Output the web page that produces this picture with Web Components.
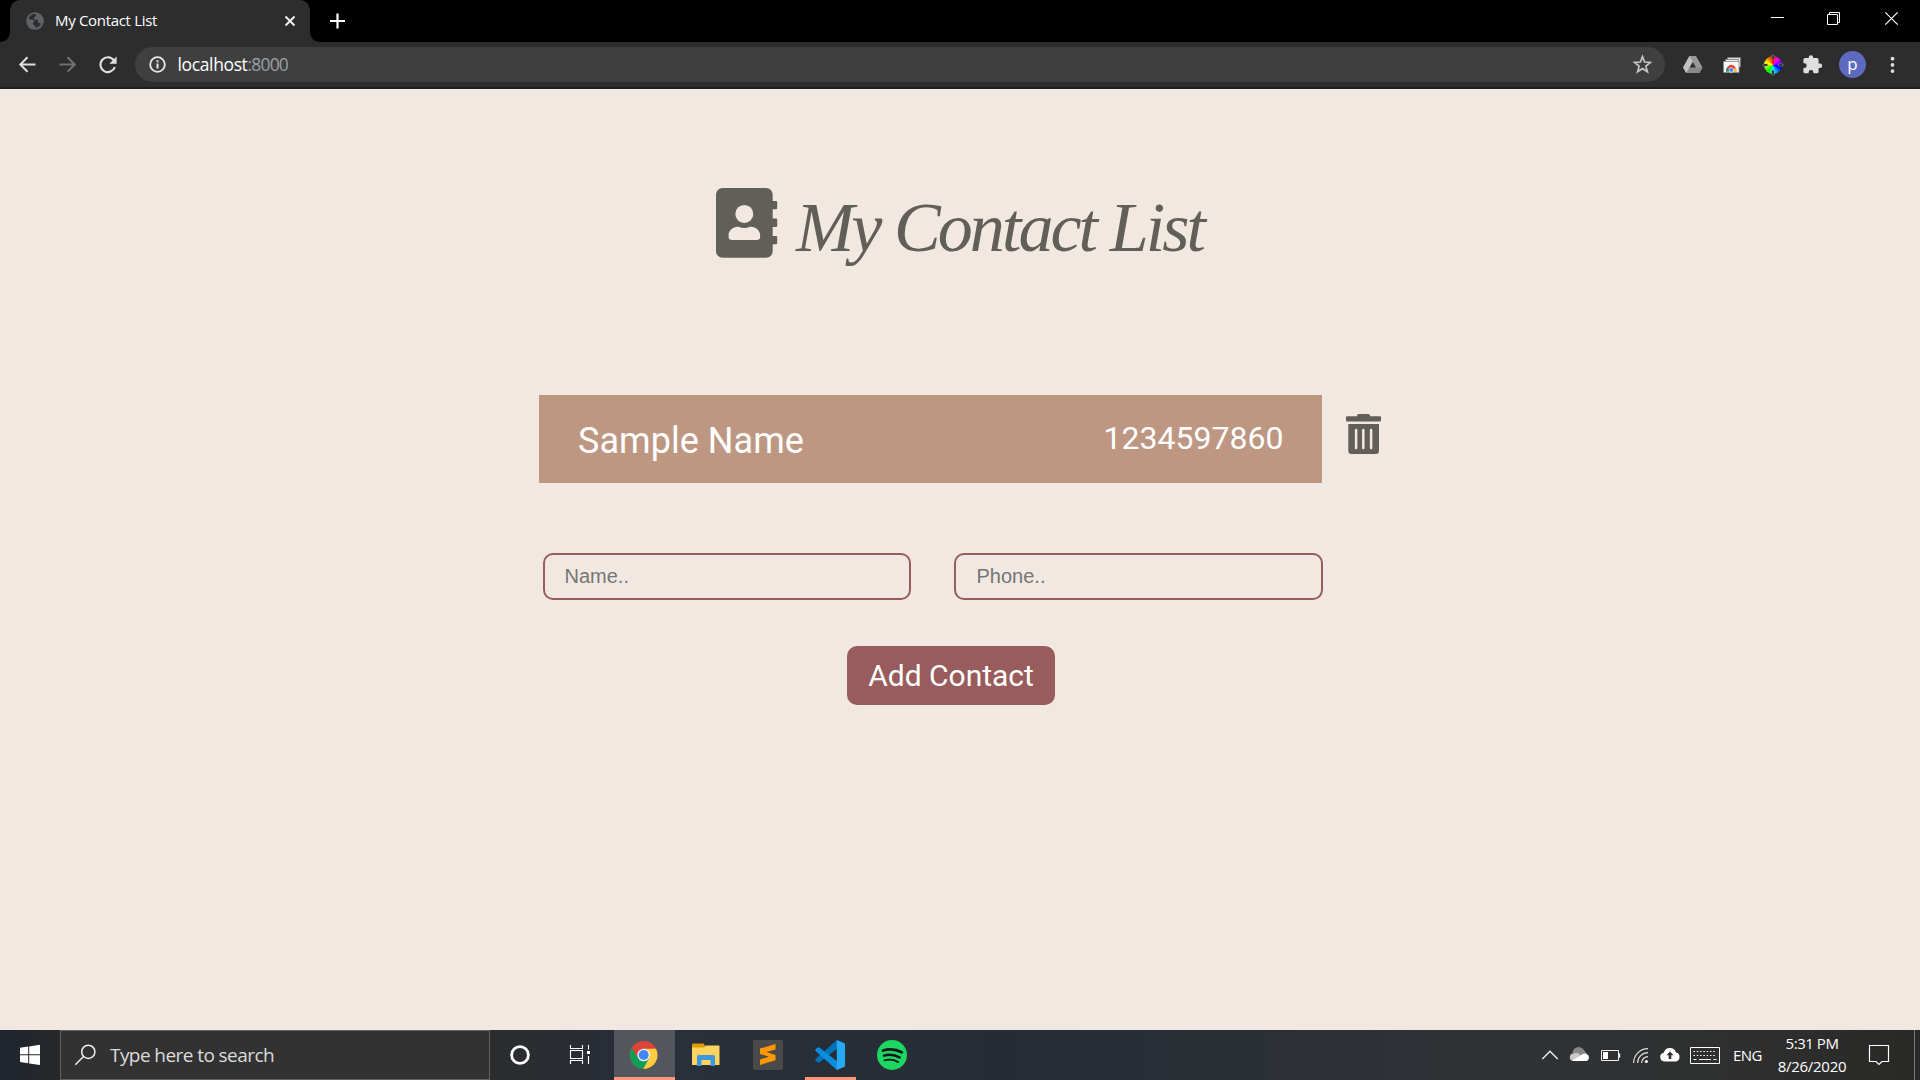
<!DOCTYPE html>
<html lang="en">
<head>
<meta charset="utf-8">
<title>My Contact List</title>
<style>
html,body{margin:0;height:100%;overflow:hidden;background:#f1e8e1}
</style>
</head>
<body>
<desktop-screen></desktop-screen>
<script>
const define = (name, html, setup) => customElements.define(name, class extends HTMLElement {
  connectedCallback() {
    if (this.shadowRoot) return;
    this.attachShadow({ mode: 'open' }).innerHTML = html;
    if (setup) setup.call(this, this.shadowRoot);
  }
});

/* A single line of text whose tracking is adjusted to fill the width in its "w" attribute. */
define('fit-text', `<style>:host{display:block;white-space:nowrap;flex:none}span{display:inline-block}</style><span><slot></slot></span>`,
function (root) {
  const w = +this.getAttribute('w'), s = root.querySelector('span');
  const text = root.querySelector('slot').assignedNodes({ flatten: true }).map(n => n.textContent).join('');
  this.style.width = w + 'px';
  s.style.letterSpacing = (w - s.getBoundingClientRect().width) / text.length + 'px';
});

/* SVG icon; "box" is its viewBox and also gives its size. */
define('svg-icon', `<style>:host{display:block;flex:none}svg{display:block;overflow:visible}</style>`,
function (root) {
  const b = this.getAttribute('box').split(' ');
  const svg = this.querySelector('template').content.querySelector('svg').cloneNode(true);
  svg.setAttribute('width', b[2]);
  svg.setAttribute('height', b[3]);
  svg.setAttribute('viewBox', b.join(' '));
  root.append(svg);
});

const icon = (box, gap, body) => `<svg-icon box="${box}" style="margin-left:${gap}px"><template><svg fill="none">${body}</svg></template></svg-icon>`;

define('browser-tabs', `<style>
:host{display:flex;height:42px;background:#000;font:15px/41px "Open Sans","Noto Sans",sans-serif;color:#fff}
.tab{display:flex;width:300px;height:42px;margin-left:10px;background:#2d2d2d;border-radius:10px 10px 0 0;position:relative}
.tab::before,.tab::after{content:"";position:absolute;bottom:0;width:10px;height:10px}
.tab::before{left:-10px;background:radial-gradient(circle at 0 0,transparent 9.5px,#2d2d2d 10.5px)}
.tab::after{right:-10px;background:radial-gradient(circle at 100% 0,transparent 9.5px,#2d2d2d 10.5px)}
fit-text{margin-left:11px}
.win{display:flex;margin-left:auto;padding-right:22px}
</style>
<div class="tab">
${icon('26 0 18 42', 16, `<circle cx="35" cy="21" r="8.8" fill="#5f6368"/><path d="M36 14.200c-3.400-.6-6.300 1.500-7.300 4.600 2.300 1.400 4.600.3 5.200 1.900.5 1.400-1.200 1.800-1 3.200.2 1.300 2 .8 2.300 2.200.1.600.1 1.200.2 1.700 2.600-.2 4.600-1.800 5.600-4-1.100-.8-2-.3-2.700-1.200-.8-1 .2-1.700-.8-2.500-1.200-.9-3.300.2-3.700-1.300-.4-1.700 2.400-1.500 2.200-4.600z" fill="#2d2d2d"/>`)}
<fit-text w="102">My Contact List</fit-text>
${icon('285 0 10 42', 128, `<path d="M285.500 16.500l9 9m0-9l-9 9" stroke="#f1f1f1" stroke-width="2"/>`)}
</div>
${icon('330 0 15 42', 20, `<path d="M337.500 13.500v15M330 21h15" stroke="#fff" stroke-width="2.200"/>`)}
<div class="win">
${icon('1771 0 13 42', 0, `<path d="M1771 17.500h13" stroke="#fff"/>`)}
${icon('1827 0 13 42', 43, `<path d="M1827.500 14.500h10v10h-10zM1829.500 14.500v-2h10v10h-2" stroke="#fff"/>`)}
${icon('1885 0 13 42', 45, `<path d="M1885.300 12.300l12.400 12.400m0-12.400l-12.400 12.400" stroke="#fff" stroke-width="1.200"/>`)}
</div>`);

define('browser-toolbar', `<style>
:host{display:flex;box-sizing:border-box;height:47px;background:#2d2d2d;border-bottom:2px solid #202020;font:17.500px/45px "Open Sans","Noto Sans",sans-serif;color:#fff}
.url{display:flex;box-sizing:border-box;width:1530px;height:35px;line-height:35px;margin:5px 0 0 18px;border-radius:18px;background:#3f3f3f}
.port{color:#9aa0a6}
.wheel{flex:none;width:18px;height:18px;border-radius:50%;margin:13.500px 0 0 22px;background:conic-gradient(#f00,#f0f,#80f,#00f,#08f,#0ff,#0f0,#8f0,#ff0,#f80,#f00)}
.me{flex:none;width:27px;height:27px;border-radius:50%;margin:9px 0 0 17px;background:#5c6bc0;font:17px/25px "Open Sans",sans-serif;text-align:center}
</style>
${icon('19 42 17 45', 19, `<path d="M35.500 64.500H20.500M27.500 57.300l-7.200 7.200 7.200 7.200" stroke="#e0e0e0" stroke-width="2"/>`)}
${icon('59 42 17 45', 23, `<path d="M59.500 64.500h15M67.500 57.300l7.200 7.200-7.200 7.200" stroke="#717171" stroke-width="2"/>`)}
${icon('99 42 18 45', 23, `<path d="M113.800 60.200A7.400 7.400 0 1 0 114.900 67" stroke="#e0e0e0" stroke-width="2.100"/><path d="M116.600 56.500v7.300h-7.300z" fill="#e0e0e0"/>`)}
<div class="url">
${icon('149 47 17 35', 14, `<circle cx="157.500" cy="64.500" r="7.300" stroke="#e8e8e8" stroke-width="1.800"/><path d="M157.500 63.500v5M157.500 60.300v2" stroke="#e8e8e8" stroke-width="2"/>`)}
<fit-text w="70" style="margin-left:11.500px">localhost</fit-text><fit-text class="port" w="40.500">:8000</fit-text>
${icon('1633 47 19 35', 1345, `<path d="M1642.500 56.600l2.100 5.400 5.800.4-4.500 3.700 1.500 5.700-4.900-3.200-4.900 3.200 1.500-5.700-4.500-3.700 5.800-.4z" stroke="#c6c6c6" stroke-width="1.700"/>`)}
</div>
${icon('1683 42 20 45', 18, `<path d="M1689.500 56h6.500l6.500 11.500-3.200 5.500h-13l-3.200-5.500z" fill="#999"/><path d="M1689.500 56l3.300 5.700-6.500 11.300-3.200-5.500z" fill="#c1c1c1"/><path d="M1686.300 73l3.300-5.500h12.900l-3.200 5.500z" fill="#8a8a8a"/><path d="M1692.800 62l3.100 5.500h-6.300z" fill="#2d2d2d"/>`)}
${icon('1723 42 19 45', 20, `<path d="M1727.500 57.500h13v9.500h-13z" fill="#ddd" stroke="#777" stroke-width=".8"/><path d="M1725.500 59.500h13v10h-13z" fill="#eee" stroke="#777" stroke-width=".8"/><path d="M1723.500 61.500h15.500v11h-15.500z" fill="#f8f8f8" stroke="#888" stroke-width=".8"/><path d="M1726 71.500a5.300 6.800 0 0 1 10.600 0z" fill="#e04438"/><path d="M1726 71.500a5 5 0 0 1 1-3.500l3 1.500-1 2z" fill="#0f9d58"/><path d="M1735.500 68a5 5 0 0 1 1.100 3.500h-3.200l-1-2z" fill="#fbc02d"/><circle cx="1731.300" cy="70" r="2.300" fill="#4285f4" stroke="#fff" stroke-width=".6"/>`)}
<div class="wheel">${icon('1764 55.500 18 18', 0, `<g fill="#111" stroke="#999" stroke-width=".6"><path d="M1772 54.700h2v4.500h-2zM1772 69.800h2v4.500h-2zM1763 63.500h4.500v2h-4.500zM1778.500 63.500h4.500v2h-4.500z"/></g>`)}</div>
${icon('1803 42 19 45', 21, `<path d="M1820 63.500h-1.400v-3.600c0-1-.8-1.800-1.800-1.800h-3.600v-.5a2.200 2.200 0 0 0-4.500 0v.5h-3.500c-1 0-1.800.8-1.800 1.800v3.400h.9a2.400 2.400 0 0 1 0 4.800h-.9v3.400c0 1 .8 1.800 1.800 1.800h3.400v-1a2.400 2.400 0 0 1 4.800 0v1h3.400c1 0 1.800-.8 1.800-1.800v-3.600h1.400a2.200 2.200 0 0 0 0-4.400z" fill="#dedede"/>`)}
<div class="me">p</div>
${icon('1890 42 5 45', 24, `<g fill="#dedede"><circle cx="1892.500" cy="58.700" r="1.900"/><circle cx="1892.500" cy="64.900" r="1.900"/><circle cx="1892.500" cy="71.100" r="1.900"/></g>`)}
`);

define('page-title', `<style>
:host{display:flex;height:100px;padding:81px 0 0 716px;font:italic 70px/100px "Liberation Serif",serif;color:#625f59}
fit-text{margin-left:19px;line-height:116px}
</style>
${icon('716 170 61 100', 0, `<g fill="#625f59"><rect x="716" y="188" width="56.700" height="69.700" rx="6.500"/><path d="M772 201h4a1.200 1.200 0 0 1 1.200 1.200v5.900a1.200 1.200 0 0 1-1.200 1.200h-4zM772 218.600h4a1.200 1.200 0 0 1 1.200 1.200v5.900a1.200 1.200 0 0 1-1.200 1.200h-4zM772 235.900h4a1.200 1.200 0 0 1 1.200 1.200v5.900a1.200 1.200 0 0 1-1.200 1.200h-4z"/></g><g fill="#f1e8e1"><circle cx="744.300" cy="213.900" r="9"/><path d="M737.900 226.700h.7c3.700 1.600 7.800 1.600 11.500 0h.7c5.200 0 9.300 3.800 9.300 8.400v2.500c0 1.400-1.400 2.500-3.100 2.500h-25.300c-1.700 0-3.100-1.100-3.100-2.500v-2.500c0-4.600 4.100-8.400 9.300-8.400z"/></g>`)}
<fit-text w="407"><slot></slot></fit-text>`);

define('contact-row', `<style>
:host{display:flex;height:88px;padding-left:539px;font-family:Roboto,sans-serif;color:#fff}
.card{display:flex;justify-content:space-between;box-sizing:border-box;width:783px;padding:0 38.500px 0 39px;background:#be9783}
.name{font-size:36px;line-height:92px}.phone{font-size:32px;line-height:86px}
</style>
<div class="card"><fit-text class="name" w="226"><slot name="name"></slot></fit-text><fit-text class="phone" w="180"><slot name="phone"></slot></fit-text></div>
${icon('1346 395 35 88', 24, `<g fill="#625f59"><path d="M1357 417v-1.500a1.500 1.500 0 0 1 1.500-1.500h10a1.500 1.500 0 0 1 1.500 1.500v1.500z"/><rect x="1346" y="416.200" width="35" height="5.200" rx="1"/><path d="M1348.300 424h30.700v26.700a3.300 3.300 0 0 1-3.300 3.300h-24.100a3.300 3.300 0 0 1-3.300-3.300z"/></g><path d="M1356.100 430v18M1363.300 430v18M1371.100 430v18" stroke="#f1e8e1" stroke-width="2.500" stroke-linecap="round"/>`)}`);

define('contact-field', `<style>
:host{display:block;width:368px;height:47px}
input{display:block;box-sizing:border-box;width:100%;height:100%;margin:0;padding:0 20px 0 var(--inset,19.500px);border:2px solid #995c5c;border-radius:10px;background:transparent;font:20px "Liberation Sans",sans-serif;outline:0}
input::placeholder{color:#757575;opacity:1}
</style><input type="text">`, function (r) { r.querySelector('input').placeholder = this.getAttribute('label'); });

define('add-button', `<style>
:host{display:block}
button{display:flex;justify-content:center;width:208px;height:59px;padding:0;border:0;border-radius:10px;background:#995c5c;color:#fff;font:30px/59px Roboto,sans-serif}
</style><button><slot></slot></button>`);

define('contact-page', `<style>
:host{display:flex;flex-direction:column;height:941px;background:#f1e8e1}
contact-row{margin-top:125px}
.form{display:flex;gap:43px;margin:70px 0 0 543px}
add-button{margin:46px 0 0 847px}
</style>
<page-title>My Contact List</page-title>
<contact-row><span slot="name">Sample Name</span><span slot="phone">1234597860</span></contact-row>
<div class="form"><contact-field label="Name.."></contact-field><contact-field label="Phone.." style="width:369px;--inset:20.5px"></contact-field></div>
<add-button>Add Contact</add-button>`);

define('task-bar', `<style>
:host{display:flex;height:50px;background:linear-gradient(90deg,#1f252f 0,#262829 60px,#2b2d2e 490px,#292c33 570px,#29303a 680px,#252c35 1000px,#303336 1500px,#2e2f2f 1720px,#292927 1920px);font:15px/50px "Open Sans","Noto Sans",sans-serif;color:#fff}
.search{display:flex;box-sizing:border-box;width:430px;height:50px;margin-left:20px;border:1px solid #606060;background:#323232;font-size:19px;line-height:48px;color:#dcdcdc}
.app{display:flex;box-sizing:border-box;height:50px}
.chrome{width:61px;margin-left:24px;background:#53565c;border-bottom:3px solid #ff9675}
.code{width:51px;margin-left:22px;border-bottom:3px solid #ff9675}
.clock{display:flex;flex-direction:column;align-items:center;width:70px;margin-left:15px;padding-top:2px;line-height:23px}
.tray{display:flex;margin-left:auto;padding-right:4px}
</style>
${icon('20 1030 20 50', 20, `<path d="M20 1047.800l8.200-1.200v7.700H20zM29.200 1046.400l10.800-1.600v9.500H29.200zM20 1055.300h8.200v7.900l-8.200-1.200zM29.200 1055.300H40v9.800l-10.800-1.600z" fill="#fff"/>`)}
<div class="search">
${icon('75 1031 21 48', 14, `<circle cx="88.300" cy="1051.800" r="6.600" stroke="#eee" stroke-width="1.500"/><path d="M83.500 1056.500l-8.200 8.200" stroke="#eee" stroke-width="1.500"/>`)}
<fit-text w="164" style="margin-left:14px">Type here to search</fit-text>
</div>
${icon('510 1030 20 50', 20, `<circle cx="520" cy="1055" r="8.400" stroke="#fff" stroke-width="2.800"/>`)}
${icon('570 1030 20 50', 40, `<path d="M570.500 1045v3.500h12V1045M570.500 1064v-3.500h12v3.500M570.500 1050.500h12v8h-12zM588.500 1045v4.500M588.500 1056v8" stroke="#fff" stroke-width="1.100"/><path d="M587 1051h3v3h-3z" fill="#fff"/>`)}
<div class="app chrome">
${icon('630 1030 28 47', 16, `<circle cx="643.700" cy="1055" r="13.900" fill="#db4437"/><path d="M631.700 1048.100A13.900 13.900 0 0 0 643.700 1068.900L649.200 1058.200L638.200 1058.200z" fill="#0f9d58"/><path d="M656 1048.700A13.900 13.900 0 0 1 643.200 1068.900L649.200 1058.200L643.700 1048.700z" fill="#ffcd40"/><circle cx="643.700" cy="1055" r="6.300" fill="#f1f1f1"/><circle cx="643.700" cy="1055" r="5" fill="#4285f4"/>`)}
</div>
${icon('692 1030 28 50', 17, `<path d="M692 1044.500a1 1 0 0 1 1-1h10.500l2 2.500-2 4H692z" fill="#e09c00"/><path d="M692 1047.500h12l2-2h12.500a1 1 0 0 1 1 1v18.500H692z" fill="#ffd35e"/><path d="M697 1066v-9.500a1.500 1.500 0 0 1 1.500-1.500h15a1.500 1.500 0 0 1 1.500 1.500v9.500h-4.500v-6h-9v6z" fill="#3b97df"/>`)}
${icon('753 1030 30 50', 33, `<rect x="753" y="1040" width="30" height="30" rx="2" fill="#4a4a4a"/><path d="M760 1048.600l15.500-4.700v5.500l-9 2.700 9 2.800v5.400l-15.500 4.600v-5.500l9-2.700-9-2.800z" fill="#ff9800"/>`)}
<div class="app code">
${icon('815 1030 30 47', 10, `<path d="M815.300 1060.500l2.200 1.900a1.500 1.500 0 0 0 1.800 0L838 1048v-7l-1.200-1-21.500 19.200z" fill="#0072b8"/><path d="M815.300 1049.500l2.200-1.900a1.500 1.500 0 0 1 1.800 0L838 1062v7l-1.200 1-21.500-19.200z" fill="#0a8ddd"/><path d="M836.800 1040l7.200 3a1.500 1.500 0 0 1 1 1.400v21.200a1.500 1.500 0 0 1-1 1.400l-7.200 3z" fill="#25a9f2"/>`)}
</div>
${icon('877 1030 30 50', 21, `<circle cx="892" cy="1055" r="15" fill="#1ed760"/><g stroke="#10151a" stroke-linecap="round"><path d="M883 1050.500c6.200-1.800 13.500-1.100 18.800 1.900" stroke-width="2.800"/><path d="M883.800 1055.600c5.300-1.500 11.400-.8 16 1.900" stroke-width="2.300"/><path d="M884.500 1060.300c4.700-1.200 9.400-.7 13.500 1.700" stroke-width="1.900"/></g>`)}
<div class="tray">
${icon('1542 1030 16 50', 0, `<path d="M1542.300 1059l7.700-7.700 7.700 7.700" stroke="#eee" stroke-width="1.400"/>`)}
${icon('1570 1030 20 50', 12, `<path d="M1573 1055a6 6 0 0 1 10.500-5.500l3.500 4.500-7 4z" fill="#888"/><path d="M1573.600 1061a3.800 3.800 0 0 1 0-7.600c2-1 4-.8 5.500.5l7 7z" fill="#c8c8c8"/><path d="M1572 1060.500l10.500-6.200a4 4 0 0 1 4-.3 3.700 3.700 0 0 1 0 7h-13z" fill="#fff"/>`)}
${icon('1601 1030 19 50', 11, `<path d="M1601.500 1050.500h17v10h-17z" stroke="#eee"/><path d="M1603 1052h5v7h-5zM1619 1053.500h1.200v4h-1.200z" fill="#fff"/>`)}
${icon('1633 1030 15 50', 13, `<g stroke="#ddd" stroke-width="1.200"><path d="M1633.600 1063a14.400 14.400 0 0 1 14.400-14.400M1637.600 1063a10.400 10.400 0 0 1 10.400-10.400M1641.600 1063a6.400 6.400 0 0 1 6.400-6.400"/></g><circle cx="1646.400" cy="1061.500" r="1.600" fill="#fff"/>`)}
${icon('1660 1030 20 50', 12, `<path d="M1664.300 1061.500a4.400 4.400 0 0 1-.5-8.700 6.300 6.300 0 0 1 12.200-.3 4.600 4.600 0 0 1-.2 9z" fill="#fff"/><path d="M1670 1051.500l3.600 3.700h-2.300v3.800h-2.600v-3.800h-2.300z" fill="#2f3030"/>`)}
${icon('1690 1030 30 50', 10, `<path d="M1690.500 1047.500h29v16h-29z" stroke="#fff"/><path d="M1693.500 1051.500h23M1693.500 1055.500h23" stroke="#fff" stroke-dasharray="1.500 1.800"/><path d="M1693.500 1059.500h3M1699 1059.500h12M1713.500 1059.500h3" stroke="#fff"/>`)}
<fit-text w="29" style="margin-left:13px">ENG</fit-text>
<div class="clock"><fit-text w="53">5:31 PM</fit-text><fit-text w="68.500">8/26/2020</fit-text></div>
${icon('1869 1030 20 50', 22, `<path d="M1869.500 1045.500h19v16h-6.500l-3 3-3-3h-6.500z" stroke="#fff" stroke-width="1.200"/>`)}
${icon('1914 1030 2 50', 25, `<path d="M1914.500 1030v50" stroke="#777"/>`)}
</div>`);

define('desktop-screen', `<style>:host{display:flex;flex-direction:column;width:1920px;height:1080px}</style>
<browser-tabs></browser-tabs><browser-toolbar></browser-toolbar><contact-page></contact-page><task-bar></task-bar>`);
</script>
</body>
</html>
